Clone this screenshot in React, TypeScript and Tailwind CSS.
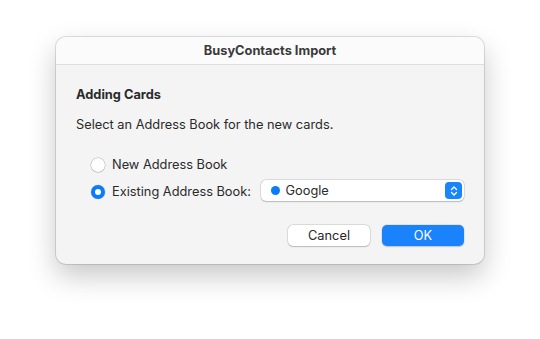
import React from "react";

const Radio = ({ checked }: { checked: boolean }) =>
  checked ? (
    <span className="flex h-[14px] w-[14px] items-center justify-center rounded-full bg-[#0b7bfe] shadow-[0_0_0_0.5px_rgba(0,0,0,0.12)]">
      <span className="h-[6px] w-[6px] rounded-full bg-white" />
    </span>
  ) : (
    <span className="h-[14px] w-[14px] rounded-full bg-white shadow-[0_0_0_0.5px_rgba(0,0,0,0.25),0_0.5px_1px_rgba(0,0,0,0.15)]" />
  );

export default function App() {
  return (
    <div
      className="h-[339px] w-[540px] bg-white pl-[56px] pt-[37px] text-[12.8px] text-[#2a2a2a]"
      style={{ fontFamily: "Inter, 'Liberation Sans', sans-serif" }}
    >
      <div className="flex h-[227px] w-[428px] flex-col overflow-hidden rounded-[10px] bg-[#f4f4f4] shadow-[0_0_0_1px_rgba(0,0,0,0.12),0_12px_28px_rgba(0,0,0,0.22)]">
        <div className="flex h-[28px] items-center justify-center border-b border-[#dedede] bg-[#fbfbfb] font-bold text-[#3a3a3a]">
          BusyContacts Import
        </div>

        <div className="flex flex-1 flex-col px-[20px] pt-[22px]">
          <div className="font-bold leading-[16px]">Adding Cards</div>
          <div className="mt-[14px] leading-[16px]">Select an Address Book for the new cards.</div>

          <div className="mt-[23px] flex flex-col pl-[15px]">
            <div className="flex h-[18px] items-center gap-[7px]">
              <Radio checked={false} />
              <span>New Address Book</span>
            </div>
            <div className="mt-[6px] flex items-center">
              <div className="flex w-[170px] items-center gap-[7px] pt-[2px]">
                <Radio checked={true} />
                <span>Existing Address Book:</span>
              </div>
              <div className="flex h-[21px] w-[204px] items-center rounded-[5px] bg-white pl-[10px] pr-[2px] shadow-[0_0_0_0.5px_rgba(0,0,0,0.15),0_0.5px_1.5px_rgba(0,0,0,0.18)]">
                <span className="h-[9px] w-[9px] rounded-full bg-[#0b7bfe]" />
                <span className="ml-[6px] flex-1">Google</span>
                <span className="flex h-[17px] w-[17px] items-center justify-center rounded-[4px] bg-[#1a84fb]">
                  <svg width="8" height="12" viewBox="0 0 8 12" fill="none" stroke="white" strokeWidth="1.4" strokeLinecap="round" strokeLinejoin="round">
                    <path d="M1.5 4.5 L4 2 L6.5 4.5" />
                    <path d="M1.5 7.5 L4 10 L6.5 7.5" />
                  </svg>
                </span>
              </div>
            </div>
          </div>

          <div className="mt-[24px] flex justify-end gap-[12px]">
            <button className="flex h-[21px] w-[82px] items-center justify-center rounded-[5px] bg-white text-[#262626] shadow-[0_0_0_0.5px_rgba(0,0,0,0.15),0_0.5px_1.5px_rgba(0,0,0,0.18)]">
              Cancel
            </button>
            <button className="flex h-[21px] w-[82px] items-center justify-center rounded-[5px] bg-[#1a82fb] text-white shadow-[0_0_0_0.5px_rgba(0,0,0,0.08),0_0.5px_1.5px_rgba(0,0,0,0.18)]">
              OK
            </button>
          </div>
        </div>
      </div>
    </div>
  );
}
